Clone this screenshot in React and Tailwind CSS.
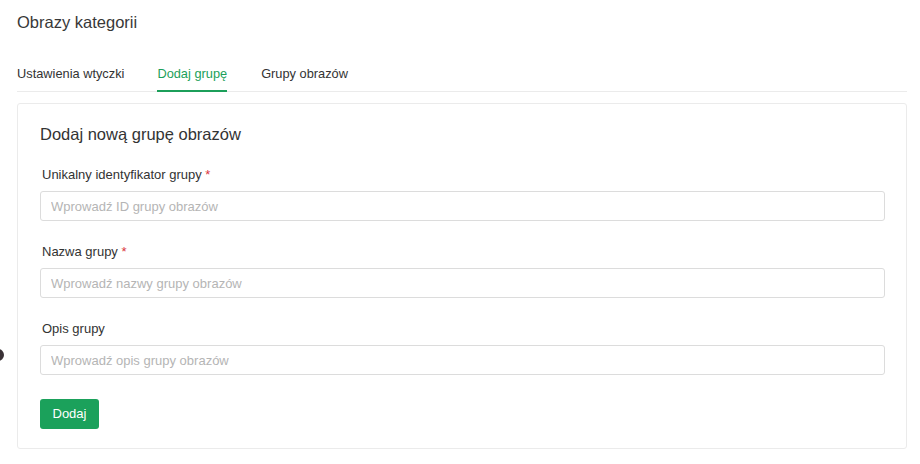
export default function App() {
  const inputCls =
    "block w-full h-[30px] border border-[#dcdcdc] rounded-[3px] px-[10px] text-[13px] text-[#333] placeholder:text-[#b5b5b5] outline-none bg-white";
  return (
    <div
      className="relative w-[920px] h-[464px] bg-white overflow-hidden pl-[17px] pr-[13px] pt-[11px]"
      style={{ fontFamily: '"Liberation Sans", Arial, sans-serif' }}
    >
      <div className="absolute left-[-8px] top-[349px] w-[12px] h-[12px] rounded-full bg-[#3a3236]" />
      <h1 className="text-[16.5px] leading-[22px] text-[#383838] font-normal">Obrazy kategorii</h1>
      <div className="mt-[33px] flex gap-[33px] border-b border-[#ebebeb] text-[12.8px] leading-[16px]">
        <div className="pb-[9px] text-[#333]">Ustawienia wtyczki</div>
        <div className="pb-[7px] text-[#1c9f5a] border-b-2 border-[#1c9f5a] mb-[-1px]">Dodaj grupę</div>
        <div className="pb-[9px] pl-[1px] text-[#333]">Grupy obrazów</div>
      </div>
      <div className="mt-[11px] border border-[#ebebeb] rounded-[3px] pl-[22px] pr-[21px] pt-[18px] pb-[19px]">
        <h2 className="text-[16.5px] leading-[24px] text-[#333] font-normal">Dodaj nową grupę obrazów</h2>
        <div className="mt-[20px]">
          <label className="block pl-[2px] text-[13px] leading-[18px] text-[#333]">
            Unikalny identyfikator grupy <span className="text-[#d9363e]">*</span>
          </label>
          <input className={inputCls + " mt-[7px]"} placeholder="Wprowadź ID grupy obrazów" />
        </div>
        <div className="mt-[22px]">
          <label className="block pl-[2px] text-[13px] leading-[18px] text-[#333]">
            Nazwa grupy <span className="text-[#d9363e]">*</span>
          </label>
          <input className={inputCls + " mt-[7px]"} placeholder="Wprowadź nazwy grupy obrazów" />
        </div>
        <div className="mt-[22px]">
          <label className="block pl-[2px] text-[13px] leading-[18px] text-[#333]">Opis grupy</label>
          <input className={inputCls + " mt-[7px]"} placeholder="Wprowadź opis grupy obrazów" />
        </div>
        <button className="mt-[24px] h-[30px] px-[12.5px] rounded-[3px] bg-[#1ba15b] text-white text-[13px] leading-[30px]">
          Dodaj
        </button>
      </div>
    </div>
  );
}
